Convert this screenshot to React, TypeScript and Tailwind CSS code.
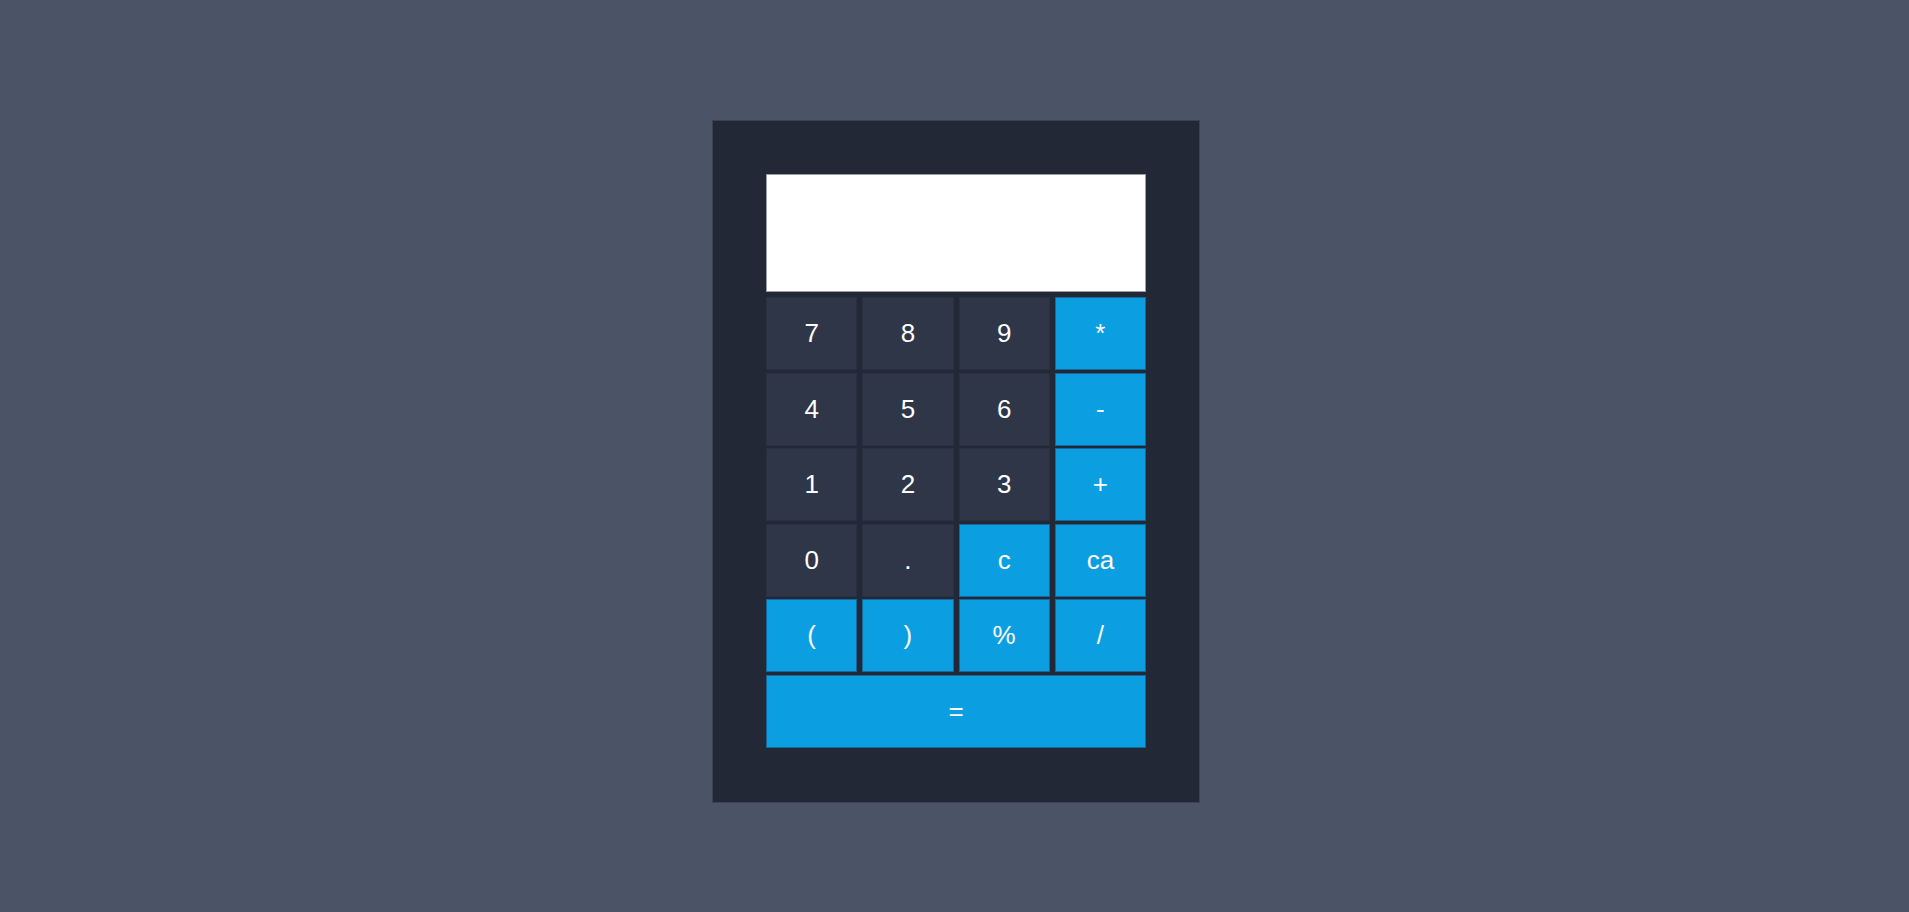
import React from "react";

const rows = [
  ["7", "8", "9", "*"],
  ["4", "5", "6", "-"],
  ["1", "2", "3", "+"],
  ["0", ".", "c", "ca"],
  ["(", ")", "%", "/"],
];

const blue = ["*", "-", "+", "c", "ca", "(", ")", "%", "/"];

function Key({ label, wide }: { label: string; wide?: boolean }) {
  const isBlue = blue.includes(label) || label === "=";
  return (
    <button
      className={`h-[73px] flex items-center justify-center text-white text-[26px] border ${
        isBlue
          ? "bg-[#0b9ee0] border-[#17689a]"
          : "bg-[#2e3648] border-[#283041]"
      } ${wide ? "col-span-4" : ""}`}
    >
      {label}
    </button>
  );
}

export default function App() {
  return (
    <div
      className="w-full h-screen bg-[#4b5467] flex items-center justify-center"
      style={{ fontFamily: '"Liberation Sans", Arial, sans-serif' }}
    >
      <div className="w-[488px] h-[683px] mt-[11px] ml-[3px] bg-[#222836] border border-[#3a4253] px-[53px] pt-[53px] flex flex-col">
        <div className="w-[380px] h-[118px] bg-white border border-[#9a9ea6]"></div>
        <div className="mt-[5px] grid grid-cols-4 gap-x-[5px] gap-y-[2.6px] w-[380px]">
          {rows.flat().map((k) => (
            <Key key={k} label={k} />
          ))}
          <Key label="=" wide />
        </div>
      </div>
    </div>
  );
}
